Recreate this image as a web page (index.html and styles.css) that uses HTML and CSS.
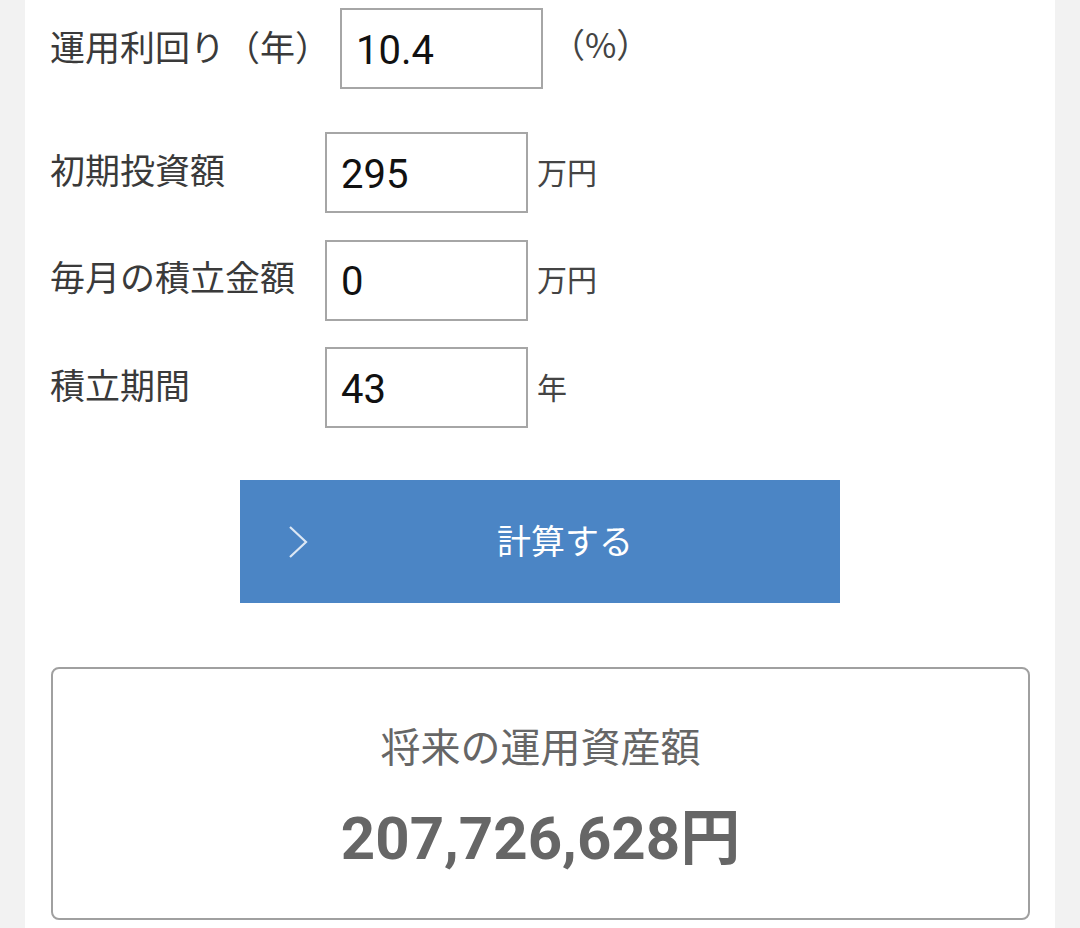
FILE: index.html
```html
<!DOCTYPE html>
<html lang="ja">
<head>
<meta charset="utf-8">
<title>積立シミュレーション</title>
<link rel="stylesheet" href="styles.css">
</head>
<body>
<main class="page">
  <div class="rate-row">
    <span class="label">運用利回り（年）</span>
    <input class="field field-rate" type="text" value="10.4">
    <span class="unit unit-rate">（%）</span>
  </div>
  <div class="grid">
    <span class="label glabel">初期投資額</span>
    <input class="field" type="text" value="295">
    <span class="unit">万円</span>

    <span class="label glabel">毎月の積立金額</span>
    <input class="field" type="text" value="0">
    <span class="unit">万円</span>

    <span class="label glabel">積立期間</span>
    <input class="field" type="text" value="43">
    <span class="unit">年</span>
  </div>
  <button class="calc" type="button">
    <svg class="chev" width="22" height="34" viewBox="0 0 22 34"><path d="M2 2 L18 17 L2 32" fill="none" stroke="#dce7f4" stroke-width="2.2"/></svg>
    <span>計算する</span>
  </button>
  <section class="result">
    <div class="result-title">将来の運用資産額</div>
    <div class="result-amount">207,726,628<span class="yen">円</span></div>
  </section>
</main>
</body>
</html>
```
FILE: styles.css
```css
html, body {
  margin: 0;
  padding: 0;
  background: #f2f2f2;
}
body {
  font-family: "Noto Sans CJK JP", "Noto Sans", sans-serif;
  color: #3a3a3a;
}
.page {
  margin: 0 25px;
  background: #ffffff;
  min-height: 928px;
  padding: 8px 0 0 25px;
  box-sizing: border-box;
  overflow: hidden;
}
.label {
  font-size: 35px;
  line-height: 1.2;
  color: #3a3a3a;
  white-space: nowrap;
}
.rate-row {
  display: flex;
  align-items: center;
  height: 81px;
}
.rate-row .label {
  padding-bottom: 6px;
}
.field {
  box-sizing: border-box;
  width: 203px;
  height: 81px;
  border: 2px solid #a6a6a6;
  border-radius: 0;
  padding: 3px 0 0 14px;
  margin: 0;
  font-family: Roboto, "Liberation Sans", sans-serif;
  font-size: 40px;
  color: #111;
  background: #fff;
  outline: none;
}
.field-rate {
  margin-left: 10px;
}
.unit {
  font-size: 30px;
  color: #444;
  line-height: 1.2;
  padding-bottom: 4px;
  margin-left: 9px;
}
.unit-rate {
  font-size: 34px;
  margin-left: 8px;
  padding-bottom: 8px;
}
.grid {
  display: grid;
  grid-template-columns: 275px 203px auto;
  grid-auto-rows: 81px;
  row-gap: 26.5px;
  align-items: center;
  margin-top: 43px;
}
.glabel {
  padding-bottom: 8px;
}
.calc {
  position: relative;
  display: flex;
  align-items: center;
  justify-content: center;
  width: 600px;
  height: 123px;
  margin: 52px 0 0 190px;
  padding: 0 0 0 50px;
  border: none;
  background: #4b85c5;
  color: #fff;
  font-family: "Noto Sans CJK JP", sans-serif;
  font-size: 34px;
  cursor: pointer;
}
.calc span {
  padding-bottom: 4px;
}
.chev {
  position: absolute;
  left: 48px;
  top: 45px;
}
.result {
  box-sizing: border-box;
  width: 979px;
  height: 253px;
  margin: 64px 0 0 1px;
  border: 2px solid #a0a0a0;
  border-radius: 8px;
  text-align: center;
  padding-top: 52px;
}
.result-title {
  font-size: 40px;
  line-height: 48px;
  color: #666;
}
.result-amount {
  margin-top: 28px;
  font-family: Roboto, "Liberation Sans", sans-serif;
  font-weight: 700;
  font-size: 60px;
  line-height: 72px;
  color: #666;
}
.yen {
  font-family: "Noto Sans CJK JP", sans-serif;
  font-weight: 700;
}
```
